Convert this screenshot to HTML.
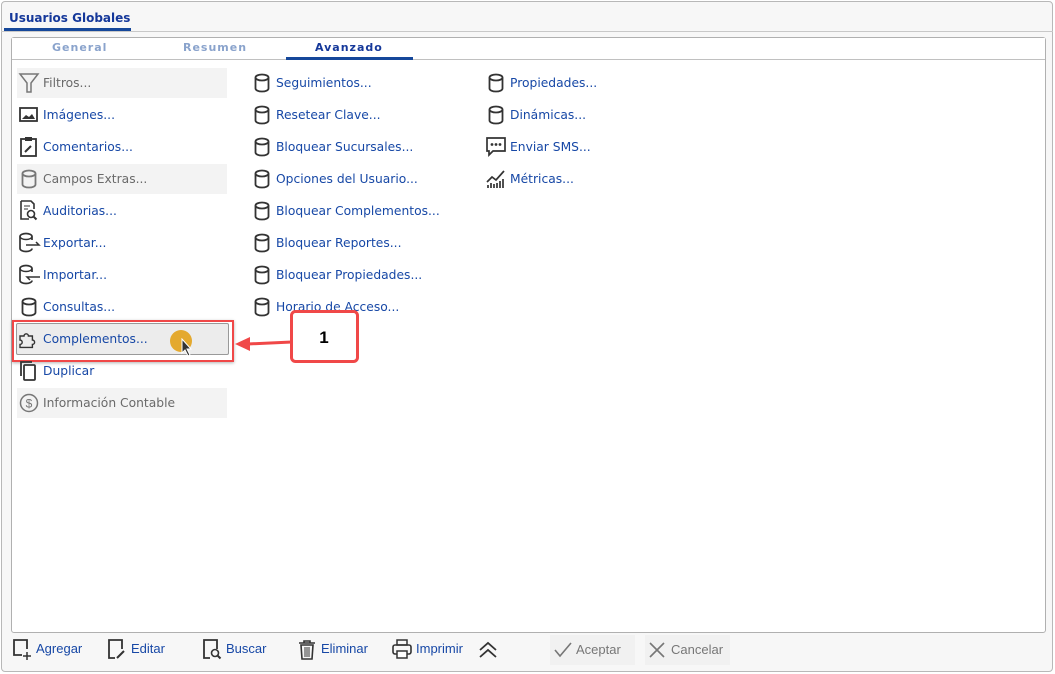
<!DOCTYPE html>
<html><head><meta charset="utf-8"><style>
*{margin:0;padding:0;box-sizing:border-box}
body{width:1055px;height:674px;background:#fff;font-family:"DejaVu Sans","Liberation Sans",sans-serif;position:relative;overflow:hidden}
.outer{position:absolute;left:1px;top:1px;width:1052px;height:671px;border:1px solid #b8b8b8;border-radius:4px;background:#f7f7f7}
.title{position:absolute;left:9px;top:11px;font-size:12px;font-weight:bold;color:#15389a}
.tul{position:absolute;left:4px;top:28px;width:127px;height:3px;background:#15479a}
.hline{position:absolute;left:1px;top:31px;width:1052px;height:1px;background:#c8c8c8}
.panel{position:absolute;left:11px;top:37px;width:1035px;height:596px;border:1px solid #b0b0b0;border-radius:3px;background:#fff}
.tabbar{position:absolute;left:12px;top:38px;width:1033px;height:22px;border-bottom:1px solid #c0c0c0;background:#fff}
.tab{position:absolute;top:41px;font-size:11px;font-weight:bold;letter-spacing:1px;color:#8aa3cc}
.it{position:absolute;height:30px;font-size:12.3px;color:#1748a6;line-height:31px;padding-left:26px;white-space:nowrap}
.it.g{color:#6a6a6a}
.bg{position:absolute;left:17px;width:210px;height:30px;background:#f3f3f3}
.it svg{position:absolute;left:0;top:5px}
.tb{position:absolute;top:641px;font-size:13px;color:#1748a6;font-family:"Liberation Sans",sans-serif}
.btn{position:absolute;top:635px;height:30px;width:85px;background:#f1f1f1;font-size:13px;color:#777;line-height:30px;font-family:"Liberation Sans",sans-serif}
</style></head><body>
<div class="outer"></div>
<div class="title">Usuarios Globales</div>
<div class="tul"></div>
<div class="hline"></div>
<div class="panel"></div>
<div class="tabbar"></div>
<div class="tab" style="left:52px">General</div>
<div class="tab" style="left:183px">Resumen</div>
<div class="tab" style="left:315px;color:#15389a">Avanzado</div>
<div style="position:absolute;left:286px;top:57px;width:127px;height:3px;background:#15479a"></div>

<div class="bg" style="top:68px"></div>
<div class="bg" style="top:164px"></div>
<div class="bg" style="top:388px"></div>

<svg width="0" height="0" style="position:absolute"><defs>
<symbol id="db" viewBox="0 0 18 20"><ellipse cx="9" cy="4.5" rx="6.5" ry="3" fill="none" stroke="currentColor" stroke-width="1.8"/><path d="M2.5 4.5v11c0 1.7 2.9 3 6.5 3s6.5-1.3 6.5-3v-11" fill="none" stroke="currentColor" stroke-width="1.8"/></symbol>
</defs></svg>

<div class="it g" style="left:17px;top:68px"><svg width="22" height="22" style="left:1px;top:4px"><path d="M2 2h18l-7 9v9h-4v-9z" fill="none" stroke="#777" stroke-width="1.5"/></svg>Filtros...</div>
<div class="it" style="left:17px;top:100px"><svg width="20" height="20" style="left:2px"><rect x="1" y="3" width="17" height="13" fill="none" stroke="#333" stroke-width="1.8"/><path d="M3 14l4-4 3 2 3-3 3 5z" fill="#333"/></svg>Imágenes...</div>
<div class="it" style="left:17px;top:132px"><svg width="20" height="22" style="left:2px;top:4px"><rect x="2" y="3" width="15" height="17" fill="none" stroke="#333" stroke-width="1.8"/><rect x="6" y="1" width="7" height="4" fill="#333"/><path d="M6 16l6-6" stroke="#333" stroke-width="2"/></svg>Comentarios...</div>
<div class="it g" style="left:17px;top:164px"><svg width="18" height="20" style="left:3px;color:#777"><use href="#db" width="18" height="20"/></svg>Campos Extras...</div>
<div class="it" style="left:17px;top:196px"><svg width="22" height="22" style="left:2px;top:4px"><path d="M2 1h10l3 3v5M2 1v18h8" fill="none" stroke="#333" stroke-width="1.6"/><path d="M5 6h6M5 9h4" stroke="#333"/><circle cx="12" cy="14" r="3.5" fill="none" stroke="#333" stroke-width="1.6"/><path d="M14.5 16.5l3 3" stroke="#333" stroke-width="2"/></svg>Auditorias...</div>
<div class="it" style="left:17px;top:228px"><svg width="24" height="22" style="left:1px;top:4px"><path d="M14 8V4.5c0-1.7-2.7-3-6-3S2 2.8 2 4.5v12c0 1.7 2.7 3 6 3s6-1.3 6-3" fill="none" stroke="#333" stroke-width="1.7"/><path d="M2 4.5c0 1.7 2.7 3 6 3s6-1.3 6-3M8 13h13l-3-3" fill="none" stroke="#333" stroke-width="1.5"/></svg>Exportar...</div>
<div class="it" style="left:17px;top:260px"><svg width="24" height="22" style="left:1px;top:4px"><path d="M14 8V4.5c0-1.7-2.7-3-6-3S2 2.8 2 4.5v12c0 1.7 2.7 3 6 3s6-1.3 6-3" fill="none" stroke="#333" stroke-width="1.7"/><path d="M2 4.5c0 1.7 2.7 3 6 3s6-1.3 6-3M22 13H9l3 3" fill="none" stroke="#333" stroke-width="1.5"/></svg>Importar...</div>
<div class="it" style="left:17px;top:292px"><svg width="18" height="20" style="left:3px;color:#333"><use href="#db" width="18" height="20"/></svg>Consultas...</div>

<div style="position:absolute;left:12px;top:320px;width:222px;height:42px;border:2px solid #f04848;box-shadow:0 1px 3px rgba(0,0,0,.3)"></div>
<div style="position:absolute;left:16px;top:323px;width:213px;height:32px;border:1px solid #999;border-radius:2px;background:#ececec"></div>
<div class="it" style="left:17px;top:324px"><svg width="22" height="22" style="left:1px;top:4px"><path d="M2 8h4a2.2 2.2 0 1 1 4.4 0h4v4a2.2 2.2 0 1 1 0 4.4v3H2v-3a2.2 2.2 0 1 0 0-4.4z" fill="none" stroke="#333" stroke-width="1.4"/></svg>Complementos...</div>
<div style="position:absolute;left:170px;top:330px;width:22px;height:22px;border-radius:50%;background:#e4a92e"></div>
<svg style="position:absolute;left:180px;top:338px" width="14" height="20"><path d="M2 1v14l3-3 3 6 2-1-3-6h4z" fill="#333" stroke="#fff" stroke-width="1"/></svg>

<div class="it" style="left:17px;top:356px"><svg width="20" height="22" style="left:2px;top:4px"><path d="M2 16V2h11" fill="none" stroke="#333" stroke-width="1.8"/><rect x="5" y="5" width="11" height="15" rx="1" fill="none" stroke="#333" stroke-width="1.8"/></svg>Duplicar</div>
<div class="it g" style="left:17px;top:388px"><svg width="20" height="20" style="left:2px;top:5px"><circle cx="10" cy="10" r="8.5" fill="none" stroke="#777" stroke-width="1.5"/><text x="10" y="14.5" font-size="12" text-anchor="middle" fill="#777" font-family="Liberation Sans">$</text></svg>Información Contable</div>

<div class="it" style="left:250px;top:68px"><svg width="18" height="20" style="left:3px;color:#333"><use href="#db" width="18" height="20"/></svg>Seguimientos...</div>
<div class="it" style="left:250px;top:100px"><svg width="18" height="20" style="left:3px;color:#333"><use href="#db" width="18" height="20"/></svg>Resetear Clave...</div>
<div class="it" style="left:250px;top:132px"><svg width="18" height="20" style="left:3px;color:#333"><use href="#db" width="18" height="20"/></svg>Bloquear Sucursales...</div>
<div class="it" style="left:250px;top:164px"><svg width="18" height="20" style="left:3px;color:#333"><use href="#db" width="18" height="20"/></svg>Opciones del Usuario...</div>
<div class="it" style="left:250px;top:196px"><svg width="18" height="20" style="left:3px;color:#333"><use href="#db" width="18" height="20"/></svg>Bloquear Complementos...</div>
<div class="it" style="left:250px;top:228px"><svg width="18" height="20" style="left:3px;color:#333"><use href="#db" width="18" height="20"/></svg>Bloquear Reportes...</div>
<div class="it" style="left:250px;top:260px"><svg width="18" height="20" style="left:3px;color:#333"><use href="#db" width="18" height="20"/></svg>Bloquear Propiedades...</div>
<div class="it" style="left:250px;top:292px"><svg width="18" height="20" style="left:3px;color:#333"><use href="#db" width="18" height="20"/></svg>Horario de Acceso...</div>

<div class="it" style="left:484px;top:68px"><svg width="18" height="20" style="left:3px;color:#333"><use href="#db" width="18" height="20"/></svg>Propiedades...</div>
<div class="it" style="left:484px;top:100px"><svg width="18" height="20" style="left:3px;color:#333"><use href="#db" width="18" height="20"/></svg>Dinámicas...</div>
<div class="it" style="left:484px;top:132px"><svg width="22" height="22" style="left:1px;top:4px"><path d="M2 2h18v13H8l-4 4v-4H2z" fill="none" stroke="#333" stroke-width="1.7"/><circle cx="7" cy="8.5" r="1.4" fill="#333"/><circle cx="11" cy="8.5" r="1.4" fill="#333"/><circle cx="15" cy="8.5" r="1.4" fill="#333"/></svg>Enviar SMS...</div>
<div class="it" style="left:484px;top:164px"><svg width="22" height="22" style="left:1px;top:4px"><path d="M2 14l5-5 4 3 8-9" fill="none" stroke="#333" stroke-width="1.7"/><path d="M3 20v-3M6 20v-5M9 20v-4M12 20v-5M15 20v-7M18 20v-9" stroke="#333" stroke-width="1.7"/></svg>Métricas...</div>

<svg style="position:absolute;left:232px;top:308px" width="130" height="58"><path d="M60 34L16 36" stroke="#f04848" stroke-width="3"/><path d="M3 36l15-7v14z" fill="#f04848"/><rect x="59.5" y="3.5" width="66" height="50" rx="4" fill="#fff" stroke="#f04848" stroke-width="3"/><text x="92" y="35" font-size="17" font-weight="bold" text-anchor="middle" font-family="Liberation Sans">1</text></svg>

<svg style="position:absolute;left:12px;top:639px" width="20" height="22"><path d="M10 16H2V1h13v9" fill="none" stroke="#333" stroke-width="1.8"/><path d="M15 13v8M11 17h8" stroke="#333" stroke-width="1.5"/></svg>
<div class="tb" style="left:36px">Agregar</div>
<svg style="position:absolute;left:107px;top:639px" width="20" height="22"><path d="M8 19H2V1h13v9" fill="none" stroke="#333" stroke-width="1.8"/><path d="M10 19l7-7" stroke="#333" stroke-width="2"/></svg>
<div class="tb" style="left:131px">Editar</div>
<svg style="position:absolute;left:202px;top:639px" width="20" height="22"><path d="M8 19H2V1h13v9" fill="none" stroke="#333" stroke-width="1.8"/><circle cx="13" cy="14" r="3.5" fill="none" stroke="#333" stroke-width="1.6"/><path d="M15.5 16.5l3 3" stroke="#333" stroke-width="2"/></svg>
<div class="tb" style="left:226px">Buscar</div>
<svg style="position:absolute;left:298px;top:639px" width="18" height="22"><path d="M1 4h16M6 4V2h6v2M3 6h12l-1 14H4z" fill="none" stroke="#333" stroke-width="1.6"/><path d="M7 8v10M9 8v10M11 8v10" stroke="#333"/></svg>
<div class="tb" style="left:321px">Eliminar</div>
<svg style="position:absolute;left:392px;top:639px" width="20" height="22"><rect x="5" y="1" width="10" height="5" fill="none" stroke="#333" stroke-width="1.5"/><rect x="1" y="6" width="18" height="9" rx="2" fill="none" stroke="#333" stroke-width="1.6"/><rect x="5" y="12" width="10" height="7" fill="#fff" stroke="#333" stroke-width="1.5"/></svg>
<div class="tb" style="left:416px">Imprimir</div>
<svg style="position:absolute;left:478px;top:641px" width="20" height="18"><path d="M2 9l8-7 8 7M2 16l8-7 8 7" fill="none" stroke="#333" stroke-width="1.8"/></svg>
<div class="btn" style="left:550px"><svg style="position:absolute;left:3px;top:7px" width="20" height="16"><path d="M2 8l5 6L18 1" fill="none" stroke="#777" stroke-width="1.6"/></svg><span style="position:absolute;left:26px">Aceptar</span></div>
<div class="btn" style="left:645px"><svg style="position:absolute;left:4px;top:7px" width="16" height="16"><path d="M1 1l14 14M15 1L1 15" stroke="#777" stroke-width="1.6"/></svg><span style="position:absolute;left:26px">Cancelar</span></div>
</body></html>
